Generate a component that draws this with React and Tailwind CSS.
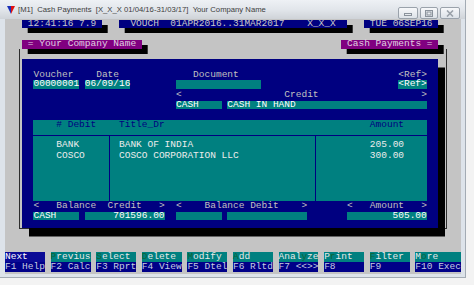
import React from "react";

// builds a fixed-width terminal line: [[col, text], ...]
function line(parts, len = 0) {
  let s = "";
  for (const [c, t] of parts) s = s.padEnd(c, " ") + t;
  return s.padEnd(len, " ");
}

const keys = [
  { top: "Next", hot: -1, bottom: "F1 Help", sel: true },
  { top: "Previus", hot: 0, bottom: "F2 Calc" },
  { top: "Select", hot: 0, bottom: "F3 Rprt" },
  { top: "Delete", hot: 0, bottom: "F4 View" },
  { top: "Modify", hot: 0, bottom: "F5 Dtel" },
  { top: "Add", hot: 0, bottom: "F6 Rltd" },
  { top: "Analyze", hot: 4, bottom: "F7 <<>>" },
  { top: "Print", hot: 1, bottom: "F8" },
  { top: "Filter", hot: 0, bottom: "F9" },
  { top: "More", hot: 1, bottom: "F10 Exec", last: true },
];

const rows = [
  { code: "BANK", title: "BANK OF INDIA", amount: "205.00" },
  { code: "COSCO", title: "COSCO CORPORATION LLC", amount: "300.00" },
];

function TitleBar() {
  return (
    <div className="h-[19px] flex items-start bg-linear-to-b from-[#eef1f5] via-[#e2e6eb] to-[#cfd3d8]">
      <svg className="ml-[7px] mt-[6px]" width="8" height="8" viewBox="0 0 8 8">
        <polygon points="0,0 4,0 4,8" fill="#1a2fb8" />
        <polygon points="4,0 8,0 4,8" fill="#e01010" />
      </svg>
      <span className="ml-[3px] mt-[5px] text-[7.7px] leading-[10px] text-[#3c3c3c] font-['Liberation_Sans',Arial,sans-serif] whitespace-pre">
        [M1]  Cash Payments  [X_X_X 01/04/16-31/03/17]  Your Company Name
      </span>
      <div className="ml-auto mr-[5px] mt-[7px] flex gap-[2px]">
        <div className="w-[20px] h-[12px] rounded-[2px] border border-[#9aa2ab] bg-linear-to-b from-[#f7f8fa] to-[#dde2e8] flex items-center justify-center">
          <svg width="8" height="6" viewBox="0 0 8 6">
            <rect x="0.5" y="3.5" width="7" height="2" fill="none" stroke="#8a929b" strokeWidth="1" />
          </svg>
        </div>
        <div className="w-[18px] h-[12px] rounded-[2px] border border-[#9aa2ab] bg-linear-to-b from-[#f7f8fa] to-[#dde2e8] flex items-center justify-center">
          <svg width="8" height="7" viewBox="0 0 8 7">
            <rect x="0.5" y="0.5" width="7" height="6" fill="none" stroke="#8a929b" strokeWidth="1" />
            <rect x="2" y="2" width="4" height="3" fill="none" stroke="#8a929b" strokeWidth="1" />
          </svg>
        </div>
        <div className="w-[20px] h-[12px] rounded-[2px] border border-[#9aa2ab] bg-linear-to-b from-[#f7f8fa] to-[#dde2e8] flex items-center justify-center">
          <svg width="8" height="7" viewBox="0 0 8 7">
            <path d="M1 0.5 L7 6.5 M7 0.5 L1 6.5" stroke="#9aa1a9" strokeWidth="1.6" />
          </svg>
        </div>
      </div>
    </div>
  );
}

function Grid() {
  return (
    <div className="ml-[2ch] w-[69ch] h-[80.96px] bg-[#008080] flex flex-col">
      <div className="h-[10.12px] leading-[10.12px] text-[#000080] flex whitespace-pre">
        <span className="w-[15ch] pl-[4ch]"># Debit</span>
        <span className="flex-1">Title_Dr</span>
        <span className="pr-[4ch]">Amount</span>
      </div>
      <div className="h-[5.06px]" />
      <div className="flex-1 border-t border-[#000080] flex text-[#ececec] whitespace-pre">
        <div className="w-[13.5ch] border-r border-[#000080] pl-[4ch] pt-[4.2px]">
          {rows.map((r) => (
            <div key={r.code} className="h-[10.12px] leading-[10.12px]">{r.code}</div>
          ))}
        </div>
        <div className="w-[36ch] border-r border-[#000080] pl-[1.5ch] pt-[4.2px]">
          {rows.map((r) => (
            <div key={r.code} className="h-[10.12px] leading-[10.12px]">{r.title}</div>
          ))}
        </div>
        <div className="flex-1 pr-[4ch] text-right pt-[4.2px]">
          {rows.map((r) => (
            <div key={r.code} className="h-[10.12px] leading-[10.12px]">{r.amount}</div>
          ))}
        </div>
      </div>
    </div>
  );
}

function KeyBar() {
  return (
    <div className="flex mt-[23px] whitespace-pre">
      {keys.map((k) => (
        <div key={k.top} className={k.last ? "w-[8ch] flex flex-col" : "w-[7ch] mr-[1ch] flex flex-col"}>
          <div
            className={
              k.sel
                ? "h-[10.12px] leading-[10.12px] bg-[#0a0a96] text-white"
                : "h-[10.12px] leading-[10.12px] bg-[#008080] text-[#e8e8e8]"
            }
          >
            {k.top.split("").map((ch, i) => (
              <span key={i} className={i === k.hot ? "text-[#0d6636]" : ""}>
                {ch}
              </span>
            ))}
          </div>
          <div className="h-[10.12px] leading-[10.12px] bg-[#000088] text-[#c4cbe0]">{k.bottom}</div>
        </div>
      ))}
    </div>
  );
}

export default function App() {
  const field = "h-[8.5px] leading-[8.5px] bg-[#008080] text-white whitespace-pre";
  const row = "h-[10.12px] leading-[10.12px] flex items-center";
  return (
    <div className="w-[474px] h-[285px] bg-[#f3f3f3] overflow-hidden">
      <div className="w-[466px] h-[278px] bg-[#dde3ea] border-r border-b border-[#a3abb4] flex flex-col">
        <TitleBar />
        <div className="ml-[5px] w-[456px] h-[255px] bg-[#c4c4c4] font-['Liberation_Mono','Courier_New',monospace] text-[9.5px] flex flex-col">
          {/* status line */}
          <div className={row}>
            <span className="ml-[3ch] w-[14ch] h-[8.5px] leading-[8.5px] bg-[#000080] text-[#c8c8c8] whitespace-pre shadow-[5.7px_5px_0_#000]">
              {" 12:41:16 7.9 "}
            </span>
            <span className="ml-[3ch] w-[40ch] h-[8.5px] leading-[8.5px] bg-[#000080] text-[#c8c8c8] whitespace-pre shadow-[5.7px_5px_0_#000]">
              {line([[2, "VOUCH"], [9, "01APR2016..31MAR2017"], [33, "X_X_X"]], 40)}
            </span>
            <span className="ml-[3ch] w-[13ch] h-[8.5px] leading-[8.5px] bg-[#000080] text-[#c8c8c8] whitespace-pre shadow-[5.7px_5px_0_#000]">
              {" TUE 06SEP16 "}
            </span>
          </div>
          <div className="h-[10.12px]" />
          <div className={row}>
            <span className="ml-[3ch] w-[21ch] h-[8.5px] leading-[8.5px] bg-[#800080] text-[#e0d0e0] whitespace-pre shadow-[5.7px_5px_0_#000]">
              {" = Your Company Name "}
            </span>
            <span className="ml-[35ch] w-[17ch] h-[8.5px] leading-[8.5px] bg-[#800080] text-[#e0d0e0] whitespace-pre shadow-[5.7px_5px_0_#000]">
              {" Cash Payments = "}
            </span>
          </div>

          {/* single-line frame with the voucher panel */}
          <div className="ml-[2.5ch] w-[75ch] border-l border-r border-b border-[#2e2e2e]">
            <div className="h-[10.12px]" />
            <div className="ml-[1.85px] w-[73ch] bg-[#000080] text-[#c0c0c0] shadow-[7px_8.5px_0_#000] pb-[6.3px] whitespace-pre">
              <div className="h-[10.12px]" />
              <div className="h-[10.12px] leading-[10.12px]">
                {line([[2, "Voucher"], [13, "Date"], [30, "Document"], [66, "<Ref>"]])}
              </div>
              <div className={row}>
                <span className={"ml-[2ch] w-[8ch] " + field}>00000001</span>
                <span className={"ml-[1ch] w-[8ch] " + field}>06/09/16</span>
                <span className={"ml-[8ch] w-[15ch] " + field}></span>
                <span className={"ml-[24ch] w-[5ch] " + field}>{"<Ref>"}</span>
              </div>
              <div className="h-[10.12px] leading-[10.12px]">
                {line([[27, "<"], [46, "Credit"], [70, ">"]])}
              </div>
              <div className={row}>
                <span className={"ml-[27ch] w-[8ch] " + field}>CASH</span>
                <span className={"ml-[1ch] w-[35ch] " + field}>CASH IN HAND</span>
              </div>
              <div className="h-[10.12px]" />
              <Grid />
              <div className="h-[10.12px] leading-[10.12px]">
                {line([
                  [2, "<"], [6, "Balance"], [15, "Credit"], [24, ">"],
                  [27, "<"], [32, "Balance"], [40, "Debit"], [49, ">"],
                  [57, "<"], [61, "Amount"], [70, ">"],
                ])}
              </div>
              <div className={row}>
                <span className={"ml-[2ch] w-[8ch] " + field}>CASH</span>
                <span className={"ml-[1ch] w-[14ch] text-right " + field}>701596.00</span>
                <span className={"ml-[2ch] w-[8ch] " + field}></span>
                <span className={"ml-[1ch] w-[14ch] " + field}></span>
                <span className={"ml-[7ch] w-[14ch] text-right " + field}>505.00</span>
              </div>
            </div>
          </div>

          <KeyBar />
        </div>
      </div>
    </div>
  );
}
